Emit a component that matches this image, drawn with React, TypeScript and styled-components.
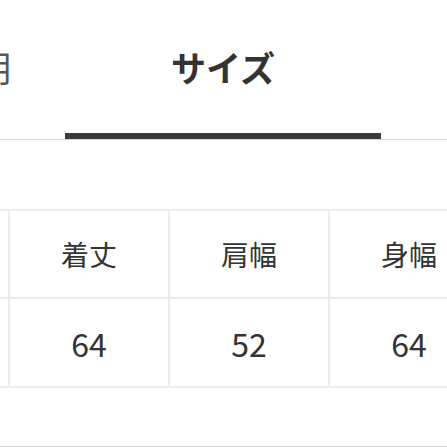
import styled, { createGlobalStyle } from 'styled-components'

const GlobalStyle = createGlobalStyle`
	html, body {
		margin: 0;
		padding: 0;
		background: #fff;
		overflow: hidden;
	}
	body {
		font-family: 'Noto Sans', 'Noto Sans CJK JP', sans-serif;
		color: #333;
	}
`

const Page = styled.div`
	width: 447px;
	height: 447px;
	overflow: hidden;
`

const TabBar = styled.div`
	display: flex;
	border-bottom: 1px solid #d8d8d8;
`

const Tab = styled.div<{ $active?: boolean; $width: number; $edge?: boolean }>`
	flex: 0 0 ${({ $width }) => $width}px;
	box-sizing: border-box;
	height: 139px;
	display: flex;
	align-items: center;
	justify-content: ${({ $edge }) => ($edge ? 'flex-end' : 'center')};
	padding-right: ${({ $edge }) => ($edge ? '54px' : '0')};
	overflow: hidden;
	white-space: nowrap;
	border-bottom: 6px solid ${({ $active }) => ($active ? '#3a3a3a' : 'transparent')};
	font-family: 'Noto Sans CJK JP', sans-serif;
	font-size: 35px;
	line-height: 1;
	font-weight: ${({ $active }) => ($active ? 700 : 400)};
	color: ${({ $active }) => ($active ? '#333' : '#555')};
`

const SizeGrid = styled.div`
	display: grid;
	grid-template-columns: repeat(4, 158px);
	grid-auto-rows: 86px 87px;
	gap: 2px;
	width: max-content;
	margin: 69px 0 0 -152px;
	border: 2px solid #ececec;
	background: #ececec;
`

const Cell = styled.div<{ $head?: boolean }>`
	background: #fff;
	display: flex;
	align-items: center;
	justify-content: center;
	font-family: ${({ $head }) =>
		$head ? "'Noto Sans CJK JP', sans-serif" : "'Noto Sans CJK JP', 'Noto Sans', sans-serif"};
	font-size: ${({ $head }) => ($head ? '28px' : '32px')};
	line-height: 1;
	color: #333;
`

const Divider = styled.div`
	margin-top: 58px;
	height: 1px;
	background: #cfcfcf;
`

const columns = [
	{ label: 'サイズ', value: 'F' },
	{ label: '着丈', value: '64' },
	{ label: '肩幅', value: '52' },
	{ label: '身幅', value: '64' },
]

export default function App() {
	return (
		<Page>
			<GlobalStyle />
			<TabBar>
				<Tab $width={65} $edge>
					商品説明
				</Tab>
				<Tab $width={316} $active>
					サイズ
				</Tab>
				<Tab $width={280}>発送</Tab>
			</TabBar>
			<SizeGrid>
				{columns.map((c) => (
					<Cell key={'h' + c.label} $head>
						{c.label}
					</Cell>
				))}
				{columns.map((c) => (
					<Cell key={'v' + c.label}>{c.value}</Cell>
				))}
			</SizeGrid>
			<Divider />
		</Page>
	)
}
